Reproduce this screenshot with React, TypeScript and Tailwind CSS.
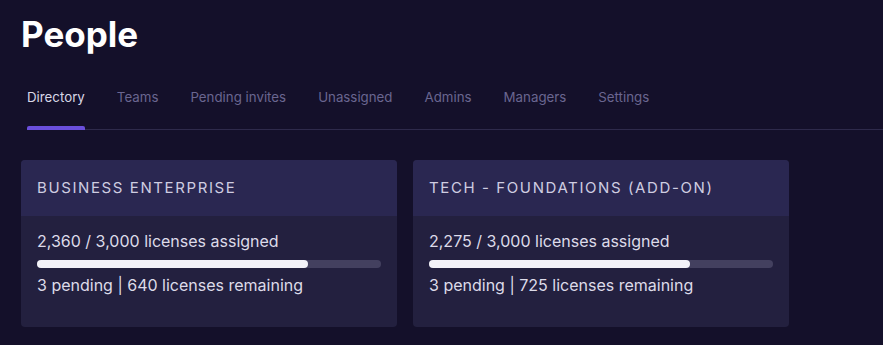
const tabs = ['Directory', 'Teams', 'Pending invites', 'Unassigned', 'Admins', 'Managers', 'Settings']

const licenses = [
  { name: 'Business Enterprise', assigned: 2360, total: 3000, pending: 3 },
  { name: 'Tech - Foundations (Add-on)', assigned: 2275, total: 3000, pending: 3 },
]

function LicenseCard({ name, assigned, total, pending }: (typeof licenses)[number]) {
  const pct = (assigned / total) * 100
  return (
    <div className="w-[376px] overflow-hidden rounded-[4px] bg-[#23203f]">
      <div className="flex h-[56px] items-center bg-[#2a2751] px-4">
        <h3 className="text-[15px] uppercase tracking-[1.6px] text-[#cfcde1]">{name}</h3>
      </div>
      <div className="px-4 pt-[14px] pb-[31px] text-[16px] leading-[22px] text-[#dddbe9]">
        <p>
          {assigned.toLocaleString('en-US')} / {total.toLocaleString('en-US')} licenses assigned
        </p>
        <div className="mt-2 h-2 w-full rounded-full bg-[#43405f]">
          <div className="h-2 rounded-full bg-[#f3f2f8]" style={{ width: `${pct}%` }} />
        </div>
        <p className="mt-[6px]">
          {pending} pending | {(total - assigned).toLocaleString('en-US')} licenses remaining
        </p>
      </div>
    </div>
  )
}

export default function App() {
  return (
    <div
      className="min-h-[345px] bg-[#14102a] pl-[21px] pt-[14px]"
      style={{ fontFamily: 'Inter, "Noto Sans", sans-serif' }}
    >
      <h1 className="text-[35px] leading-10 font-bold text-white">People</h1>
      <nav className="mt-[33px] ml-[6px] flex gap-8 border-b border-[#2e2a4b]">
        {tabs.map((t, i) => (
          <div
            key={t}
            className={`relative pb-[22px] text-[13.3px] leading-5 ${i === 0 ? 'text-[#d8d6e6]' : 'text-[#6a6690]'}`}
          >
            {t}
            {i === 0 ? (
              <span className="absolute right-0 -bottom-px left-0 h-1 rounded-t-[2px] bg-[#6a4fdc]" />
            ) : null}
          </div>
        ))}
      </nav>
      <div className="mt-[30px] flex gap-4">
        {licenses.map((l) => (
          <LicenseCard key={l.name} {...l} />
        ))}
      </div>
    </div>
  )
}
